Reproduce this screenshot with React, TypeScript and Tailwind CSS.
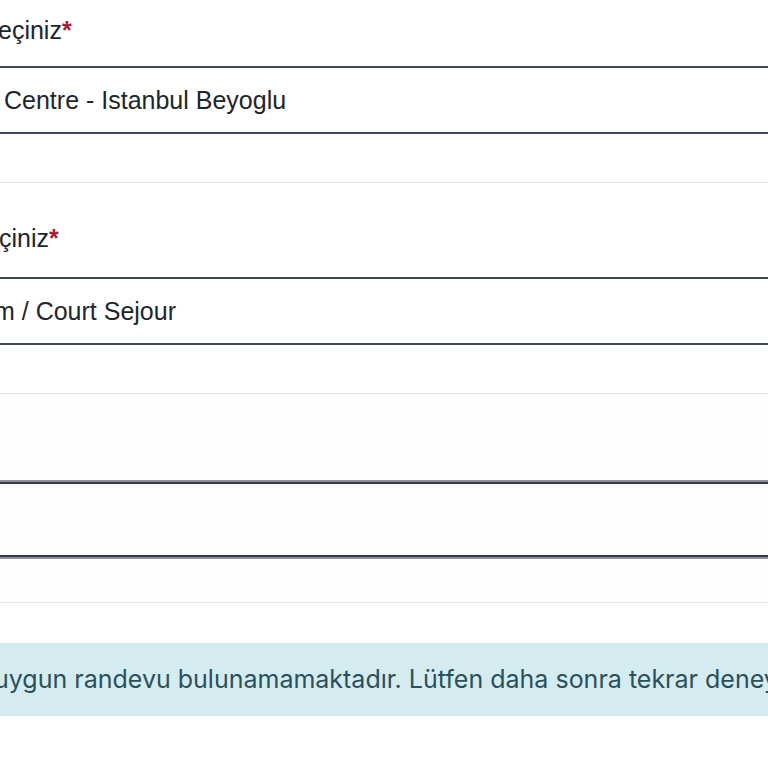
export default function App() {
  const sans = { fontFamily: '"Liberation Sans", Arial, Helvetica, sans-serif' };
  return (
    <div className="w-[768px] h-[768px] overflow-hidden bg-white text-[#212529]" style={sans}>
      <div className="h-[183px] border-b border-[#e5e5e5] flex flex-col">
        <div className="mt-[12px] h-[36px] text-[25px] leading-[36px] whitespace-nowrap ml-[-2px]">
          eçiniz<span className="text-[#a3212f] font-bold">*</span>
        </div>
        <div className="mt-[18px] h-[68px] border-y-2 border-[#3d4758] bg-white flex items-center pl-[4px] text-[25px] leading-[36px] whitespace-nowrap">
          Centre - Istanbul Beyoglu
        </div>
      </div>
      <div className="h-[211px] border-b border-[#e5e5e5] flex flex-col">
        <div className="mt-[37px] h-[36px] text-[25px] leading-[36px] whitespace-nowrap ml-[-1px]">
          çiniz<span className="text-[#a3212f] font-bold">*</span>
        </div>
        <div className="mt-[21px] h-[68px] border-y-2 border-[#3d4758] bg-white flex items-center text-[25px] leading-[36px] whitespace-nowrap">
          <span className="ml-[-6px]">m / Court Sejour</span>
        </div>
      </div>
      <div className="h-[209px] border-b border-[#e5e5e5] flex flex-col bg-[#fefefe]">
        <div className="mt-[86px] h-[79px] border-y-2 border-[#8d9096]">
          <div className="h-full border-y-2 border-[#2f3a52] bg-[#fdfdfd]"></div>
        </div>
      </div>
      <div className="mt-[40px] h-[73px] bg-[#d4ebf0] border-y border-[#cfe6ec] flex items-center overflow-hidden">
        <span
          className="whitespace-nowrap text-[25px] text-[#2b505b] ml-[-6px]"
          style={{ fontFamily: 'Inter, "Noto Sans", sans-serif' }}
        >
          uygun randevu bulunamamaktadır. Lütfen daha sonra tekrar deneyiniz.
        </span>
      </div>
    </div>
  );
}
